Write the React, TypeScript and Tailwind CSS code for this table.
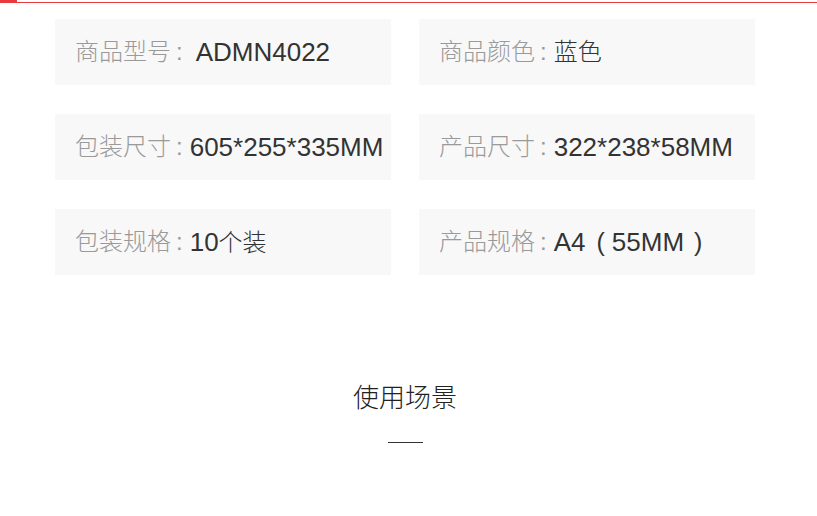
import { FC } from 'react';

type Part = { text: string; cjk?: boolean; cls?: string };

const specs: { label: string; value: Part[]; extra?: boolean }[] = [
      { label: '商品型号', value: [{ text: 'ADMN4022' }], extra: true },
      { label: '商品颜色', value: [{ text: '蓝色', cjk: true }] },
      { label: '包装尺寸', value: [{ text: '605*255*335MM' }] },
      { label: '产品尺寸', value: [{ text: '322*238*58MM' }] },
      { label: '包装规格', value: [{ text: '10' }, { text: '个装', cjk: true }] },
      {
            label: '产品规格',
            value: [
                  { text: 'A4' },
                  { text: '(', cls: 'text-[25px] font-light ml-[11px] mr-[7px]' },
                  { text: '55MM' },
                  { text: ')', cls: 'text-[25px] font-light ml-[10px]' },
            ],
      },
];

const font = { fontFamily: '"Liberation Sans", "Noto Sans CJK SC", sans-serif' };

const SpecItem: FC<{ label: string; value: Part[]; extra?: boolean }> = ({ label, value, extra }) => {
      return (
            <div className="flex items-center h-[66px] bg-[#f8f8f8] pl-[20px] leading-none whitespace-nowrap overflow-hidden">
                  <span className="text-[24px] text-[#9a9a9a] font-light">{label}</span>
                  <span className={`text-[24px] text-[#9a9a9a] ml-[5px] ${extra ? 'mr-[13px]' : 'mr-[7px]'}`}>:</span>
                  <span className="text-[#333333]">
                        {value.map((p, i) => (
                              <span key={i} className={p.cls ?? (p.cjk ? 'text-[24px] font-light' : 'text-[26px]')}>
                                    {p.text}
                              </span>
                        ))}
                  </span>
            </div>
      );
};

const App: FC = () => {
      return (
            <div className="w-[817px] h-[516px] bg-white overflow-hidden" style={font}>
                  {/* top red rule */}
                  <div className="flex h-[3px]">
                        <div className="w-[17px] h-[3px] bg-[#e93b3d]" />
                        <div className="flex-1 self-end h-px bg-[#e93b3d]" />
                  </div>

                  {/* spec grid */}
                  <div className="ml-[55px] mt-[16px] w-[700px] grid grid-cols-2 gap-x-[28px] gap-y-[29px]">
                        {specs.map((s) => (
                              <SpecItem key={s.label} label={s.label} value={s.value} extra={s.extra} />
                        ))}
                  </div>

                  {/* section title */}
                  <div className="w-[700px] ml-[55px] mt-[105px] flex flex-col items-center">
                        <h2 className="text-[26px] leading-[36px] font-light text-[#222222]">使用场景</h2>
                        <div className="mt-[26px] w-[35px] h-px bg-[#333333]" />
                  </div>
            </div>
      );
};

export default App;
